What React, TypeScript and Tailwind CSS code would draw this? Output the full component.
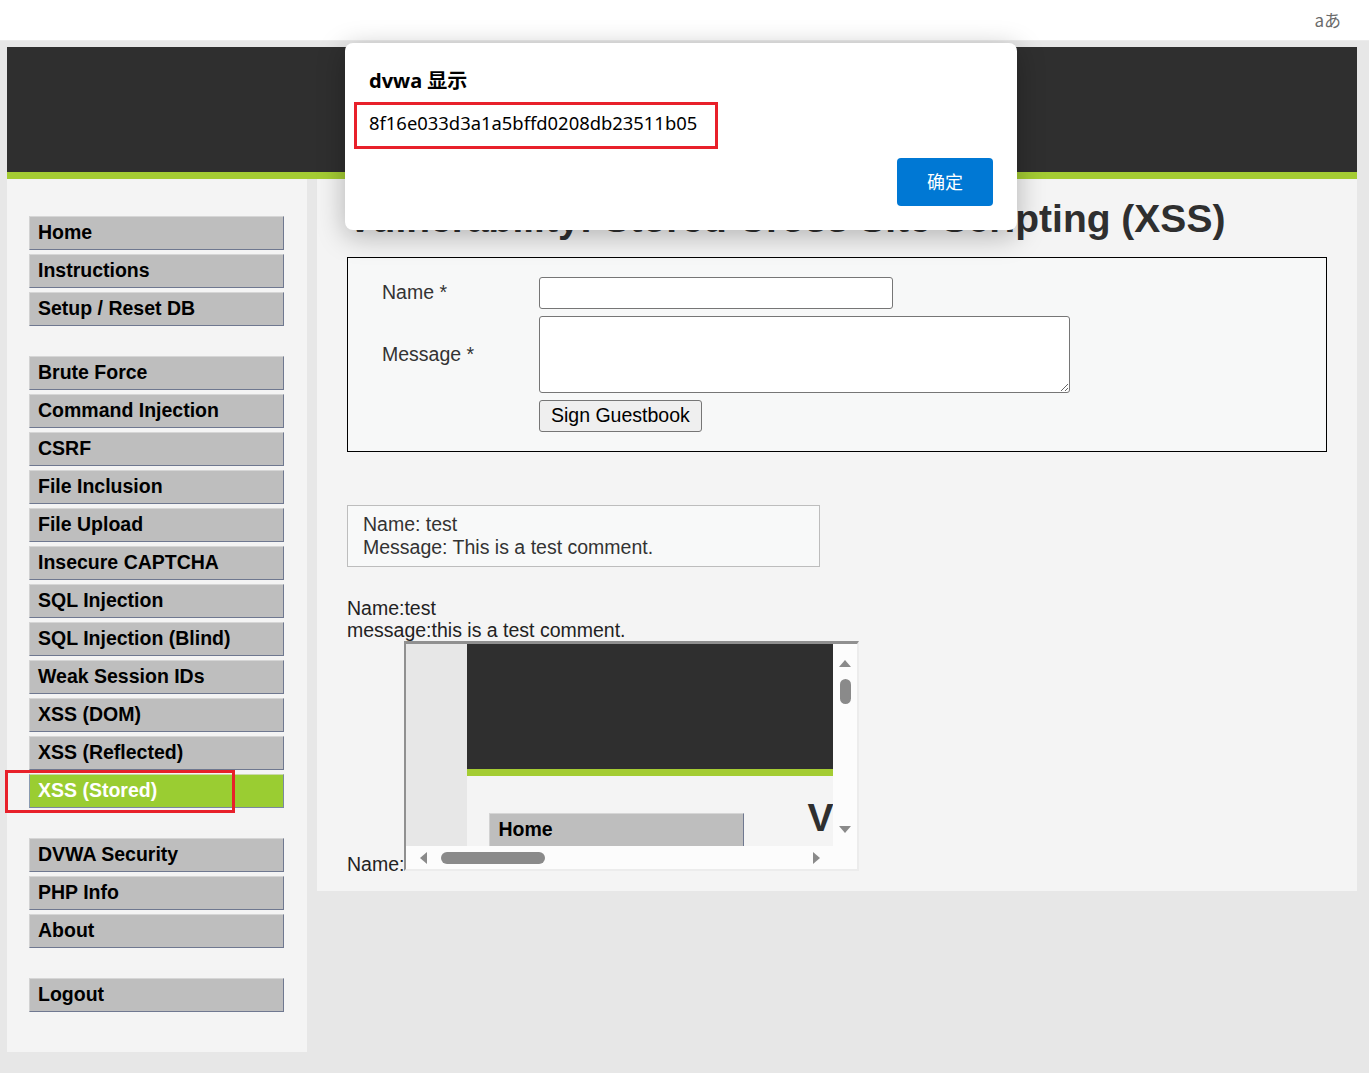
import React from "react";

const groups: string[][] = [
  ["Home", "Instructions", "Setup / Reset DB"],
  [
    "Brute Force",
    "Command Injection",
    "CSRF",
    "File Inclusion",
    "File Upload",
    "Insecure CAPTCHA",
    "SQL Injection",
    "SQL Injection (Blind)",
    "Weak Session IDs",
    "XSS (DOM)",
    "XSS (Reflected)",
    "XSS (Stored)",
  ],
  ["DVWA Security", "PHP Info", "About"],
  ["Logout"],
];

function MenuItem({ label }: { label: string }) {
  const selected = label === "XSS (Stored)";
  return (
    <div className="relative">
      <div
        className={
          selected
            ? "h-[34px] w-[255px] flex items-center pl-[8px] bg-[#9acd32] text-white font-bold text-[19.5px] border border-t-[#c9d9a8] border-l-[#8a9ab0] border-r-[#7a88a0] border-b-[#7a88a0]"
            : "h-[34px] w-[255px] flex items-center pl-[8px] bg-[#bebebe] text-black font-bold text-[19.5px] border border-t-[#d6d6d6] border-l-[#d2d2d2] border-r-[#6f7890] border-b-[#6f7890]"
        }
      >
        {label}
      </div>
      {selected && (
        <div className="absolute left-[-24px] top-[-4px] w-[230px] h-[43px] border-[3px] border-[#e8202a]" />
      )}
    </div>
  );
}

function Triangle({ dir }: { dir: "up" | "down" | "left" | "right" }) {
  const pts =
    dir === "up"
      ? "0,8 6,1 12,8"
      : dir === "down"
      ? "0,1 12,1 6,8"
      : dir === "left"
      ? "8,0 8,12 1,6"
      : "1,0 1,12 8,6";
  const w = dir === "up" || dir === "down" ? 12 : 9;
  const h = dir === "up" || dir === "down" ? 9 : 12;
  return (
    <svg width={w} height={h} viewBox={`0 0 ${w} ${h}`}>
      <polygon points={pts} fill="#8a8a8a" />
    </svg>
  );
}

function FakeFrame() {
  return (
    <div className="inline-block overflow-hidden align-baseline w-[455px] h-[230px] border-t-[3px] border-l-[2px] border-r-[2px] border-b-[2px] border-t-[#909090] border-l-[#909090] border-r-[#ececec] border-b-[#ececec] bg-white">
      <div className="grid grid-cols-[427px_24px] grid-rows-[202px_23px] h-full">
        <div className="flex overflow-hidden bg-[#f4f4f4]">
          <div className="w-[61px] h-full bg-[#e7e7e7] shrink-0" />
          <div className="flex-1 flex flex-col overflow-hidden">
            <div className="h-[132px] bg-[#2f2f2f] border-b-[7px] border-[#a4cc33] shrink-0" />
            <div className="flex items-start">
              <div className="ml-[22px] mt-[37px] w-[255px] h-[40px] shrink-0 bg-[#bebebe] border border-t-[#d6d6d6] border-l-[#d2d2d2] border-r-[#6f7890] pl-[8px] pt-[4px] font-bold text-[19.5px] text-black">
                Home
              </div>
              <div className="ml-[63px] mt-[18px] font-bold text-[39px] leading-[47px] text-[#2f2f2f] whitespace-nowrap">
                Vulnerability
              </div>
            </div>
          </div>
        </div>
        <div className="bg-[#fcfcfc] flex flex-col items-center pt-[15px]">
          <Triangle dir="up" />
          <div className="mt-[11px] w-[11px] h-[25px] rounded-full bg-[#8a8a8a]" />
          <div className="mt-[121px]">
            <Triangle dir="down" />
          </div>
        </div>
        <div className="bg-[#fcfcfc] flex items-center pl-[13px]">
          <Triangle dir="left" />
          <div className="ml-[13px] w-[104px] h-[12px] rounded-full bg-[#8a8a8a]" />
          <div className="ml-[267px]">
            <Triangle dir="right" />
          </div>
        </div>
        <div className="bg-[#fcfcfc]" />
      </div>
    </div>
  );
}

export default function App() {
  return (
    <div
      className="relative min-h-[1073px] bg-[#e7e7e7] text-[#222]"
      style={{ fontFamily: '"Liberation Sans", Arial, sans-serif' }}
    >
      <div className="h-[41px] bg-white flex items-center justify-end pr-[28px] border-b border-[#ececec]">
        <span
          className="text-[17px] text-[#6b6b6b]"
          style={{ fontFamily: '"Noto Sans CJK JP", "Noto Sans", sans-serif' }}
        >
          aあ
        </span>
      </div>
      <div className="pl-[7px] pr-[12px] pt-[6px] pb-[22px]">
        <div className="h-[132px] bg-[#2f2f2f] border-b-[7px] border-[#a4cc33]" />
        <div className="flex gap-[10px] items-start">
          <div className="w-[300px] bg-[#f4f4f4] pl-[22px] pt-[37px] pb-[40px] flex flex-col gap-[30px]">
            {groups.map((g, i) => (
              <div key={i} className="flex flex-col gap-[4px]">
                {g.map((l) => (
                  <MenuItem key={l} label={l} />
                ))}
              </div>
            ))}
          </div>
          <div className="flex-1 bg-[#f4f4f4] pl-[30px] pr-[30px] pb-[16px] text-[19.5px]">
            <h1 className="mt-[16px] font-bold text-[39px] leading-[47px] text-[#2f2f2f] whitespace-nowrap">
              Vulnerability: Stored Cross Site Scripting (XSS)
            </h1>
            <div className="mt-[15px] border border-black bg-[#f7f8f8] pl-[34px] pt-[19px] pb-[19px]">
              <div className="grid grid-cols-[157px_auto] gap-y-[7px] items-center justify-start">
                <div className="text-[#333]">Name *</div>
                <input
                  className="w-[354px] h-[32px] bg-white border border-[#767676] rounded-[3px]"
                  readOnly
                />
                <div className="text-[#333]">Message *</div>
                <textarea
                  className="block w-[531px] h-[77px] bg-white border border-[#767676] rounded-[3px]"
                  readOnly
                />
                <div />
                <div>
                  <button className="h-[32px] px-[11px] bg-[#efefef] border border-[#767676] rounded-[3px] text-[19.5px] text-black leading-none">
                    Sign Guestbook
                  </button>
                </div>
              </div>
            </div>
            <div className="mt-[53px] w-[473px] border border-[#bdbdbd] bg-[#f8f9f9] pl-[15px] py-[7px] leading-[23px] text-[#333]">
              <div>Name: test</div>
              <div>Message: This is a test comment.</div>
            </div>
            <div className="mt-[30px] leading-[22px] text-[#222]">
              <div>Name:test</div>
              <div>message:this is a test comment.</div>
              <div>
                Name:
                <FakeFrame />
              </div>
            </div>
          </div>
        </div>
      </div>

      {/* alert dialog overlay */}
      <div
        className="absolute left-[345px] top-[43px] w-[672px] h-[187px] bg-white rounded-[8px] shadow-[0_6px_28px_rgba(0,0,0,0.28)] pl-[24px] pr-[24px] pt-[24px]"
        style={{ fontFamily: '"Noto Sans", "Noto Sans CJK SC", sans-serif' }}
      >
        <div className="text-[20px] leading-[28px] font-bold text-black">
          dvwa 显示
        </div>
        <div className="mt-[15px] relative inline-block text-[18.4px] leading-[26px] text-black">
          8f16e033d3a1a5bffd0208db23511b05
          <div className="absolute left-[-15px] top-[-8px] w-[364px] h-[47px] border-[3px] border-[#e8202a]" />
        </div>
        <div className="mt-[22px] flex justify-end">
          <button
            className="w-[96px] h-[48px] bg-[#0078d4] rounded-[4px] text-white text-[18px] leading-none pb-[3px]"
            style={{ fontFamily: '"Noto Sans CJK SC", sans-serif' }}
          >
            确定
          </button>
        </div>
      </div>
    </div>
  );
}
